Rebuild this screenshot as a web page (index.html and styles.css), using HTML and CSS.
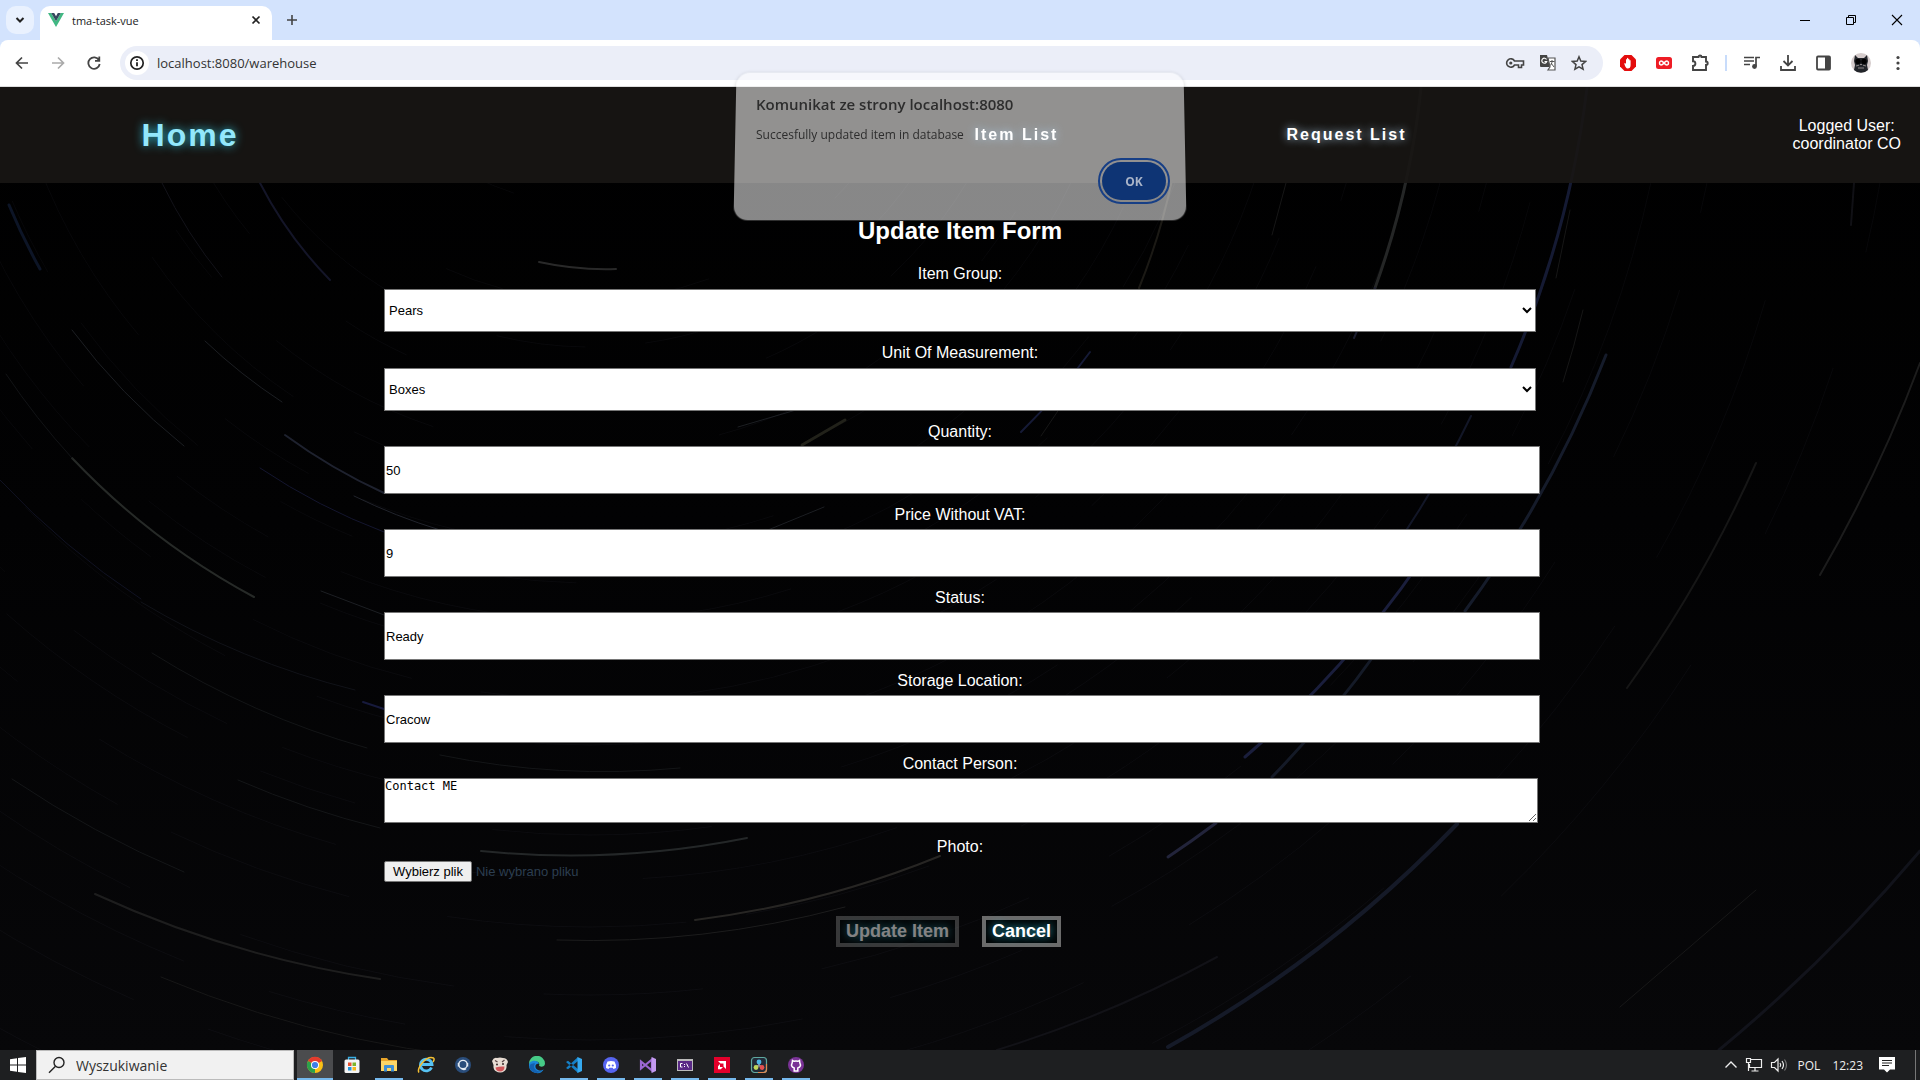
FILE: index.html
```html
<!DOCTYPE html>
<html lang="pl">
<head>
<meta charset="utf-8">
<title>tma-task-vue</title>
<link rel="stylesheet" href="styles.css">
</head>
<body>
<header class="browser">
  <div class="tabstrip">
    <button class="tab-search" aria-label="Szukaj kart"><svg width="12" height="12" viewBox="0 0 12 12"><path d="M2.500 4l3.500 3.500L9.500 4" fill="none" stroke="#222" stroke-width="2"/></svg></button>
    <div class="tab">
      <svg width="16" height="14" viewBox="0 0 16 14"><path d="M0 0h3.200L8 8.300 12.800 0H16L8 14z" fill="#41b883"/><path d="M3.200 0h3L8 3.200 9.800 0h3L8 8.300z" fill="#35495e"/></svg>
      <span class="tab-title">tma-task-vue</span>
      <button class="plain" aria-label="Zamknij"><svg width="10" height="10" viewBox="0 0 10 10"><path d="M1.500 1.500l7 7m0-7l-7 7" stroke="#222" stroke-width="1.700"/></svg></button>
    </div>
    <button class="plain new-tab" aria-label="Nowa karta"><svg width="12" height="12" viewBox="0 0 12 12"><path d="M6 1v10M1 6h10" stroke="#444" stroke-width="1.600"/></svg></button>
    <div class="window-controls">
      <button class="plain" aria-label="Minimalizuj"><svg width="12" height="12" viewBox="0 0 12 12"><path d="M1 6.500h10" stroke="#000"/></svg></button>
      <button class="plain" aria-label="Przywróć"><svg width="12" height="12" viewBox="0 0 12 12"><path d="M1.500 3.500h7v7h-7zM3.500 3.500v-2h7v7h-2" fill="none" stroke="#000"/></svg></button>
      <button class="plain" aria-label="Zamknij okno"><svg width="12" height="12" viewBox="0 0 12 12"><path d="M1 1l10 10M11 1L1 11" stroke="#000" stroke-width="1.100"/></svg></button>
    </div>
  </div>
  <div class="toolbar">
    <div class="nav-buttons">
      <button class="plain" aria-label="Wstecz"><svg width="14" height="14" viewBox="0 0 14 14"><path d="M13 7H2m5-5.500L1.500 7 7 12.500" fill="none" stroke="#444" stroke-width="1.700"/></svg></button>
      <button class="plain" aria-label="Dalej"><svg width="14" height="14" viewBox="0 0 14 14"><path d="M1 7h11M7 1.500L12.500 7 7 12.500" fill="none" stroke="#aaa" stroke-width="1.700"/></svg></button>
      <button class="plain" aria-label="Odśwież"><svg width="14" height="14" viewBox="0 0 14 14"><path d="M12 4.200A5.700 5.700 0 1 0 12.700 8M12.300 0.500v4.300H8" fill="none" stroke="#444" stroke-width="1.800"/></svg></button>
    </div>
    <div class="omnibox">
      <span class="site-info"><svg width="16" height="16" viewBox="0 0 16 16"><circle cx="8" cy="8" r="6.200" fill="none" stroke="#222" stroke-width="1.700"/><path d="M8 7.200v4M8 4.300v1.700" stroke="#222" stroke-width="1.800"/></svg></span>
      <input class="url" type="text" aria-label="Adres" value="localhost:8080/warehouse">
      <button class="plain" aria-label="Hasła"><svg width="20" height="14" viewBox="0 0 20 14"><path d="M9.500 5h9v4h-2v2.500h-3V9h-4a4.200 4.200 0 1 1 0-4z" fill="none" stroke="#444" stroke-width="1.600"/><circle cx="5.800" cy="7" r="1.600" fill="#444"/></svg></button>
      <button class="plain" aria-label="Przetłumacz"><svg width="18" height="18" viewBox="0 0 18 18"><path d="M1 1h7l3 12H2a1 1 0 0 1-1-1z" fill="#444"/><path d="M9 4h7v12H9l2-3z" fill="#fff" stroke="#555" stroke-width="1.200"/><path d="M7.500 5.500A2.500 2.500 0 1 0 7.700 7.500H5.500" fill="none" stroke="#fff" stroke-width="1.200"/><path d="M11 7.500h4.500M13 6v1.500c0 2-1 3.500-2 4M12 9l3 4" fill="none" stroke="#555"/></svg></button>
      <button class="plain" aria-label="Zakładka"><svg width="16" height="16" viewBox="0 0 16 16"><path d="M8 1.800l1.800 4.300 4.700.4L11 9.600l1.100 4.600L8 11.800l-4.100 2.400L5 9.600 1.500 6.500l4.700-.4z" fill="none" stroke="#444" stroke-width="1.500"/></svg></button>
    </div>
    <div class="extensions">
      <svg width="18" height="18" viewBox="0 0 18 18"><path d="M5.500 1h7L17 5.500v7L12.500 17h-7L1 12.500v-7z" fill="#e40d0d"/><path d="M5.200 9.500l1-.5.800 1V5.500q.5-1 1 0V4.300q.6-1 1.200 0v1q.6-1 1.200 0v1.200q.6-.8 1.200 0V11q0 3.500-3 3.500-2 0-3.400-5z" fill="#fff"/></svg>
      <svg width="18" height="18" viewBox="0 0 18 18"><rect x="1" y="3" width="16" height="12" rx="2.500" fill="#ee1c25"/><path d="M9 9c-3-3.500-4.500-1.500-4.500 0S6 12.500 9 9s4.500-1.500 4.500 0S12 12.500 9 9z" fill="none" stroke="#fff" stroke-width="1.500"/></svg>
      <svg width="18" height="18" viewBox="0 0 18 18"><path d="M2 3h5.500a1.500 1.500 0 0 1 3 0H15v4.500a1.700 1.700 0 0 1 0 3.400V16H2v-4a2.300 2.300 0 0 0 0-4.800z" fill="none" stroke="#444" stroke-width="1.900"/></svg>
    </div>
    <span class="divider"></span>
    <div class="extensions">
      <svg width="18" height="18" viewBox="0 0 18 18"><path d="M1 3.500h10M1 7h10M1 10.500h6M13 12V3.500h4" fill="none" stroke="#444" stroke-width="1.700"/><circle cx="11.500" cy="12.500" r="2.400" fill="#444"/></svg>
      <svg width="18" height="18" viewBox="0 0 18 18"><path d="M9 1v10M4.500 7L9 11.500 13.500 7M2 12v4h14v-4" fill="none" stroke="#444" stroke-width="1.800"/></svg>
      <svg width="18" height="18" viewBox="0 0 18 18"><rect x="2" y="2.500" width="13" height="13" rx="1" fill="none" stroke="#444" stroke-width="1.800"/><path d="M10 2.500h5v13h-5z" fill="#444"/></svg>
      <svg width="20" height="20" viewBox="0 0 20 20"><circle cx="10" cy="10" r="10" fill="#d5cccc"/><path d="M4 2l3 3h6l3-3 1 6-1 4 1 5a10 10 0 0 1-14 0l1-5-1-4z" fill="#22252a"/><circle cx="7" cy="8.500" r="2.700" fill="#000"/><circle cx="13" cy="8.500" r="2.700" fill="#000"/><path d="M5 13l3-.8m4 0l3 .8M9 11.500h2M7 15h6" stroke="#8b8585"/></svg>
      <svg width="18" height="18" viewBox="0 0 18 18"><g fill="#444"><circle cx="9" cy="3.500" r="1.600"/><circle cx="9" cy="9" r="1.600"/><circle cx="9" cy="14.500" r="1.600"/></g></svg>
    </div>
  </div>
  <div class="alert" role="alertdialog" aria-labelledby="alert-title">
    <h1 class="alert-title" id="alert-title">Komunikat ze strony localhost:8080</h1>
    <p class="alert-text">Succesfully updated item in database</p>
    <button class="alert-ok">OK</button>
  </div>
</header>

<main class="page">
  <svg class="sky" viewBox="0 87 1920 963" preserveAspectRatio="xMidYMid slice" aria-hidden="true">
    <g fill="none" stroke="#9aa0b4" stroke-opacity=".06" stroke-width="1">
      <circle cx="590" cy="-45" r="250" stroke-dasharray="90 140 40 200"/>
      <circle cx="590" cy="-45" r="345" stroke-dasharray="120 90 60 150"/>
      <circle cx="590" cy="-45" r="392" stroke-dasharray="150 60 90 110"/>
      <circle cx="590" cy="-45" r="440" stroke-dasharray="70 130 160 80"/>
      <circle cx="590" cy="-45" r="497" stroke-dasharray="180 90 60 140"/>
      <circle cx="590" cy="-45" r="532" stroke-dasharray="120 70 200 90"/>
      <circle cx="590" cy="-45" r="590" stroke-dasharray="200 60 100 120"/>
      <circle cx="590" cy="-45" r="628" stroke-dasharray="80 100 170 60"/>
      <circle cx="590" cy="-45" r="665" stroke-dasharray="220 80 110 130"/>
      <circle cx="590" cy="-45" r="702" stroke-dasharray="140 80 200 60"/>
      <circle cx="590" cy="-45" r="745" stroke-dasharray="170 120 90 70"/>
      <circle cx="590" cy="-45" r="790" stroke-dasharray="250 70 120 100"/>
      <circle cx="590" cy="-45" r="850" stroke-dasharray="180 90 240 60"/>
      <circle cx="590" cy="-45" r="880" stroke-dasharray="100 80 220 140"/>
      <circle cx="590" cy="-45" r="925" stroke-dasharray="260 100 90 120"/>
      <circle cx="590" cy="-45" r="972" stroke-dasharray="190 60 240 100"/>
      <circle cx="590" cy="-45" r="1040" stroke-dasharray="220 120 160 90"/>
      <circle cx="590" cy="-45" r="1085" stroke-dasharray="140 90 300 100"/>
      <circle cx="590" cy="-45" r="1140" stroke-dasharray="260 80 180 120"/>
      <circle cx="590" cy="-45" r="1225" stroke-dasharray="200 150 280 80"/>
      <circle cx="590" cy="-45" r="1310" stroke-dasharray="300 120 180 150"/>
    </g>
    <g fill="none" stroke="#23262b" stroke-linecap="round">
      <path stroke="#343434" stroke-width="2" d="M539 262A311 311 0 0 0 616 269"/>
      <path stroke-width="1" d="M72 330A640 640 0 0 0 184 446"/>
      <path stroke="#303431" stroke-width="2" d="M72 458A722 722 0 0 0 254 597"/>
      <path d="M205 341A545 545 0 0 0 282 402"/>
      <path stroke="#262a3a" stroke-width="2" d="M285 435A568 568 0 0 0 384 493"/>
      <path stroke="#191b3a" d="M260 468A610 610 0 0 0 384 532"/>
      <path stroke="#292c36" d="M354 496A590 590 0 0 0 440 530"/>
      <path stroke="#191b32" stroke-width="2" d="M260 183A400 400 0 0 0 330 280"/>
      <path stroke="#17171f" d="M162 183A485 485 0 0 0 222 277"/>
      <path stroke="#101a30" stroke-width="3" d="M9 205A632 632 0 0 0 40 269"/>
      <path stroke="#16181b" d="M6 374A720 720 0 0 0 72 458"/>
      <path stroke="#14162a" d="M0 480A788 788 0 0 0 141 599"/>
      <path stroke="#14161d" d="M141 602A788 788 0 0 0 355 690"/>
      <path stroke="#17191b" d="M152 653A825 825 0 0 0 367 748"/>
      <path stroke="#2c3031" stroke-width="2" d="M481 851A903 903 0 0 0 747 838"/>
      <path stroke="#302e2b" stroke-width="2" d="M695 920A970 970 0 0 0 940 856"/>
      <path stroke="#222" d="M557 940A986 986 0 0 0 845 907"/>
      <path stroke="#242424" stroke-width="2" d="M95 894A1063 1063 0 0 0 380 979"/>
      <path stroke="#1b1b1b" d="M161 977A1108 1108 0 0 0 560 1063"/>
      <path stroke="#1c204a" stroke-width="2" d="M363 702L384 709"/>
      <path stroke="#2a2a20" stroke-width="3" d="M802 445L845 420"/>
      <path d="M738 427L796 410M768 530L824 507M321 591L392 618"/>
      <path stroke="#181a1c" d="M440 755A815 815 0 0 0 680 768M12 779A1005 1005 0 0 0 184 872M238 780A896 896 0 0 0 380 828"/>
      <path stroke="#2e3030" stroke-width="3" d="M1421 88A843 843 0 0 1 1375 288"/>
      <path stroke="#22243a" stroke-width="2" d="M1375 288A843 843 0 0 1 1354 338"/>
      <path stroke="#1a2140" stroke-width="3" d="M1587 88A1010 1010 0 0 1 1511 367"/>
      <path stroke="#1a2234" stroke-width="3" d="M1606 355A1092 1092 0 0 1 1465 611"/>
      <path stroke="#171c30" stroke-width="2" d="M1471 416A996 996 0 0 1 1386 560"/>
      <path stroke="#20254a" stroke-width="3" d="M1438 535A1025 1025 0 0 1 1245 757"/>
      <path stroke="#192030" stroke-width="3" d="M1378 650A1052 1052 0 0 1 1272 777"/>
      <path stroke="#2a2c48" stroke-width="3" d="M1216 823A1072 1072 0 0 1 1168 857"/>
      <path stroke="#191f30" stroke-width="4" d="M1457 824A1232 1232 0 0 1 1168 1047"/>
      <path stroke="#232323" stroke-width="2" d="M1920 363A1391 1391 0 0 1 1820 575"/>
      <path stroke="#1b1b1b" stroke-width="2" d="M1756 463A1270 1270 0 0 1 1627 688"/>
      <path stroke="#151720" stroke-width="3" d="M1920 851A1600 1600 0 0 1 1719 1050"/>
      <path stroke="#22201a" stroke-width="2" d="M1172 180A624 624 0 0 1 1139 288"/>
      <path stroke="#1b2144" stroke-width="2" d="M1090 352A640 640 0 0 1 1021 432"/>
      <path stroke="#1c1c1c" d="M1064 402L1041 436M1286 183L1272 235M1570 210L1556 278M1583 310A1060 1060 0 0 1 1563 382M1756 890L1620 1007"/>
      <path stroke="#15151b" stroke-width="2" d="M1217 957A1190 1190 0 0 1 997 1050M1854 183L1851 225"/>
    </g>
  </svg>

  <nav class="navbar">
    <a class="brand" href="#home">Home</a>
    <a class="nav-link items" href="#items">Item List</a>
    <a class="nav-link requests" href="#requests">Request List</a>
    <p class="user">Logged User:<br>coordinator CO</p>
  </nav>

  <form class="item-form">
    <h2 class="form-title">Update Item Form</h2>
    <div class="field">
      <label for="group">Item Group:</label>
      <select id="group"><option>Pears</option></select>
    </div>
    <div class="field">
      <label for="unit">Unit Of Measurement:</label>
      <select id="unit"><option>Boxes</option></select>
    </div>
    <div class="field text">
      <label for="quantity">Quantity:</label>
      <input id="quantity" type="text" value="50">
    </div>
    <div class="field text">
      <label for="price">Price Without VAT:</label>
      <input id="price" type="text" value="9">
    </div>
    <div class="field text">
      <label for="status">Status:</label>
      <input id="status" type="text" value="Ready">
    </div>
    <div class="field text">
      <label for="location">Storage Location:</label>
      <input id="location" type="text" value="Cracow">
    </div>
    <div class="field text">
      <label for="contact">Contact Person:</label>
      <textarea id="contact">Contact ME</textarea>
    </div>
    <div class="field photo">
      <label for="photo">Photo:</label>
      <div class="file-row">
        <input class="file-input" id="photo" type="file">
        <label class="file-button" for="photo">Wybierz plik</label>
        <span class="file-name">Nie wybrano pliku</span>
      </div>
    </div>
    <div class="actions">
      <button class="action" type="submit" disabled>Update Item</button>
      <button class="action" type="button">Cancel</button>
    </div>
  </form>
</main>

<footer class="taskbar">
  <button class="plain start" aria-label="Start"><svg width="16" height="16" viewBox="0 0 16 16"><path d="M0 2.300L7 1.300v6.300H0zM8 1.100L16 0v7.600H8zM0 8.500h7v6.300l-7-1zM8 8.500h8V16l-8-1.100z" fill="#fff"/></svg></button>
  <label class="search">
    <svg width="18" height="18" viewBox="0 0 18 18"><circle cx="11" cy="6.500" r="5" fill="none" stroke="#222" stroke-width="1.400"/><path d="M7.500 10.200L1 16.800" stroke="#222" stroke-width="1.400"/></svg>
    <input type="text" aria-label="Wyszukiwanie" placeholder="Wyszukiwanie">
  </label>
  <div class="apps">
    <span class="app open active"><svg width="18" height="18" viewBox="0 0 18 18"><circle cx="9" cy="9" r="8" fill="#fbc116"/><path d="M9 9L2 5a8 8 0 0 1 14 0z" fill="#e33b2e"/><path d="M9 9l0 8A8 8 0 0 1 2 5z" fill="#2ba24c"/><circle cx="9" cy="9" r="4" fill="#fff"/><circle cx="9" cy="9" r="3.100" fill="#3f7ee8"/></svg></span>
    <span class="app"><svg width="18" height="18" viewBox="0 0 18 18"><path d="M5.500 4V1.500h7V4" fill="none" stroke="#3ab0e6" stroke-width="1.300"/><rect x="1.500" y="3.500" width="15" height="13.500" rx="1.500" fill="#f4f4f4"/><path d="M5 6.500h3.500V10H5z" fill="#e8502e"/><path d="M9.500 6.500H13V10H9.500z" fill="#7cb529"/><path d="M5 11h3.500v3.500H5z" fill="#2494d8"/><path d="M9.500 11H13v3.500H9.500z" fill="#f5b81c"/></svg></span>
    <span class="app open"><svg width="18" height="18" viewBox="0 0 18 18"><path d="M1 2h6l1.500 2H17v11H1z" fill="#e9a52a"/><path d="M1 5h16v10H1z" fill="#fcd667"/><path d="M4 15.500V10q0-1 1-1h8q1 0 1 1v5.500h-3V12H7v3.500z" fill="#3d8fd6"/></svg></span>
    <span class="app"><svg width="18" height="18" viewBox="0 0 18 18"><path d="M14.500 11.500A5.800 5.800 0 1 1 15 8.500H5" fill="none" stroke="#57c2f2" stroke-width="2.800"/><path d="M2 16.500C-1 13 9-1 16.500 2c1 .800.500 2.500-.5 4" fill="none" stroke="#f5c033" stroke-width="1.500"/></svg></span>
    <span class="app"><svg width="18" height="18" viewBox="0 0 18 18"><circle cx="9" cy="9" r="8" fill="#2a4d7b"/><circle cx="9" cy="8.500" r="4.200" fill="none" stroke="#e4eaf2" stroke-width="1.300"/><path d="M4.500 7v3.500M13.500 7v3.500M7 12.500q3 2 5 0" stroke="#e4eaf2" stroke-width="1.500" fill="none"/></svg></span>
    <span class="app"><svg width="18" height="18" viewBox="0 0 18 18"><path d="M1 5q2-4 5-3 3-1 6 0 4 0 5 4l-1.500 3q.5 4-2 6-4 3-9 0-2.500-2-2-6z" fill="#e8ddd4"/><path d="M4.500 11.500q4.500-1.500 9-1 0 5-4.500 5-4 0-4.500-4z" fill="#d0565a"/><path d="M4 4.500l2.500 1.500M13.500 4L11 6" stroke="#5a4546" stroke-width="1.300"/><circle cx="6" cy="8.500" r="1" fill="#3a2829"/><circle cx="12" cy="8" r="1" fill="#3a2829"/></svg></span>
    <span class="app"><svg width="18" height="18" viewBox="0 0 18 18"><path d="M1 8a8 8 0 0 1 16-.5c0 3.500-5 4-6 2 1-2-.5-4-3-4-3 0-5 2-7 2.500z" fill="#46cb87"/><path d="M1 9c0-5 9-6 10-1-4-1-5 4-1 6 2 1 4.500.5 6-1A8 8 0 0 1 1 9z" fill="#1a86d8"/><path d="M6 10c0 4 4 6 8 5-7 5-14-1-12-6 1-1 3-2 5-1.500z" fill="#1461b0"/></svg></span>
    <span class="app open"><svg width="18" height="18" viewBox="0 0 18 18"><path d="M1 6l2-1.300L13 13v4zM1 12l2 1.300L13 5V1z" fill="#1580c8"/><path d="M12.500 1L17 3v12l-4.500 2z" fill="#35a9f0"/></svg></span>
    <span class="app open"><svg width="18" height="18" viewBox="0 0 18 18"><circle cx="9" cy="9" r="8" fill="#5765f0"/><path d="M5.500 5.500Q9 4.300 12.500 5.500 14.500 9 14 12l-2.500 1-.8-1.200H7.300L6.500 13 4 12q-.5-3 1.500-6.500z" fill="#fff"/><circle cx="7.200" cy="9.500" r="1.100" fill="#5765f0"/><circle cx="10.800" cy="9.500" r="1.100" fill="#5765f0"/></svg></span>
    <span class="app open"><svg width="18" height="18" viewBox="0 0 18 18"><path d="M2 5.500v7L13 3.500v11z" fill="none" stroke="#9b67d3" stroke-width="2.200"/><path d="M12.500 1L17 3v12l-4.500 2z" fill="#c39af0"/></svg></span>
    <span class="app open"><svg width="18" height="18" viewBox="0 0 18 18"><path d="M1 3h16v12H1z" fill="#bbb"/><path d="M2 5h14v9H2z" fill="#5a2a86"/><path d="M6.500 7.500h-2v3.500h2M8 8.500h1M8 10.500h1M10.500 7.500l2 4" fill="none" stroke="#fff"/></svg></span>
    <span class="app open"><svg width="18" height="18" viewBox="0 0 18 18"><path d="M1 1h16v16H1z" fill="#e4002b"/><path d="M5 5h8v8l-2.500-2.500v-3h-3z" fill="#fff"/><path d="M7 8v3h3l-2.200 2.200H5v-3z" fill="#fff"/></svg></span>
    <span class="app open"><svg width="18" height="18" viewBox="0 0 18 18"><rect x="1.500" y="1.500" width="15" height="15" rx="3" fill="#232b38" stroke="#5fa8a0" stroke-width="1.200"/><path d="M16.500 8v5.500a3 3 0 0 1-3 3H8" fill="none" stroke="#e08852" stroke-width="1.200"/><path d="M9 9L9 6M9 9l-3 2.500M9 9l3 2.500" stroke="#889" stroke-width="2"/><circle cx="9" cy="6" r="2.400" fill="#4cb6e4"/><circle cx="6" cy="11.500" r="2.400" fill="#bfd75a"/><circle cx="12" cy="11.500" r="2.400" fill="#e5504f"/></svg></span>
    <span class="app open"><svg width="18" height="18" viewBox="0 0 18 18"><circle cx="9" cy="9" r="8" fill="#7a3296"/><path d="M5.500 4.500L7 5.300q2-.5 4 0l1.500-.8.300 2.300q2 4-2 5.200v3h-3.600v-3q-4-1.200-2-5.200z" fill="none" stroke="#fff" stroke-width="1.500"/></svg></span>
  </div>
  <div class="tray">
    <svg width="14" height="14" viewBox="0 0 14 14"><path d="M1.500 9.500L7 4l5.500 5.500" fill="none" stroke="#eee" stroke-width="1.400"/></svg>
    <svg width="18" height="16" viewBox="0 0 18 16"><path d="M6 2.500h10.500v8H4.500V7M10 10.500v3.500M6.500 14h7M1.500 1.500h4v4h-4zM3.500 5.500V14" fill="none" stroke="#eee" stroke-width="1.200"/></svg>
    <svg width="18" height="16" viewBox="0 0 18 16"><path d="M1.500 5.500h3L8 2v12l-3.500-3.500h-3z" fill="none" stroke="#eee" stroke-width="1.200"/><path d="M10 6q1.500 2 0 4M12 4q3 4 0 8" fill="none" stroke="#eee" stroke-width="1.200"/><path d="M14.500 2.500q4 5.500 0 11" fill="none" stroke="#777" stroke-width="1.200"/></svg>
    <span class="lang">POL</span>
    <span class="clock">12:23</span>
    <svg width="16" height="16" viewBox="0 0 16 16"><path d="M0 0h16v12.500h-5L8 15.500l-3-3H0z" fill="#fff"/><path d="M3 3.500h10M3 6h10M3 8.500h7" stroke="#222"/></svg>
    <span class="show-desktop"></span>
  </div>
</footer>
</body>
</html>
```
FILE: styles.css
```css
* { box-sizing: border-box; }
body {
  margin: 0;
  min-height: 100vh;
  display: flex;
  flex-direction: column;
  background: #020203;
  font-family: "Liberation Sans", Arial, sans-serif;
}
svg { display: block; flex: none; }
.plain {
  border: 0;
  padding: 0;
  background: none;
  display: flex;
  align-items: center;
  justify-content: center;
}

/* Browser chrome */
.browser { position: relative; background: #d3e3fd; font-family: "Open Sans", "Noto Sans", sans-serif; }
.tabstrip { height: 40px; display: flex; align-items: center; padding-left: 6px; }
.tab-search {
  width: 28px;
  height: 28px;
  border: 0;
  padding: 0;
  border-radius: 10px;
  background: #e9f1fe;
  display: flex;
  align-items: center;
  justify-content: center;
}
.tab {
  width: 232px;
  height: 34px;
  margin: 6px 0 0 6px;
  padding: 0 11px 6px 8px;
  border-radius: 10px 10px 0 0;
  background: #fff;
  display: flex;
  align-items: center;
  gap: 8px;
}
.tab-title { flex: 1; font-size: 11px; color: #222; }
.new-tab { margin-left: 14px; }
.window-controls { margin-left: auto; display: flex; }
.window-controls .plain { width: 46px; height: 40px; }
.toolbar {
  height: 47px;
  padding: 0 13px 0 15px;
  border-bottom: 1px solid #ddd;
  border-radius: 8px 8px 0 0;
  background: #fff;
  display: flex;
  align-items: center;
}
.nav-buttons { display: flex; gap: 22px; }
.omnibox {
  flex: 1;
  height: 34px;
  margin: 0 16px 0 19px;
  padding: 0 16px 0 5px;
  border-radius: 17px;
  background: #ebeef8;
  display: flex;
  align-items: center;
  gap: 14px;
}
.site-info { width: 24px; height: 24px; padding: 4px; border-radius: 12px; background: #fff; }
.url {
  flex: 1;
  margin-left: -6px;
  padding: 0;
  border: 0;
  background: none;
  color: #333;
  font: 13px "Open Sans", "Noto Sans", sans-serif;
}
.extensions { display: flex; align-items: center; gap: 18px; }
.divider { width: 2px; height: 16px; margin: 0 16px; background: #c8dcfb; }

/* Alert fading over the page */
.alert {
  position: absolute;
  z-index: 2;
  top: 71px;
  left: 50%;
  width: 450px;
  height: 150px;
  margin-left: -225px;
  padding: 22px 16px 20px 21px;
  display: flex;
  flex-direction: column;
}
.alert::before {
  content: "";
  position: absolute;
  z-index: -1;
  inset: 0;
  border-radius: 14px;
  background: rgba(255, 255, 255, .53);
  box-shadow: 0 1px 4px rgba(0, 0, 0, .2);
  transform: perspective(2000px) rotateX(10deg);
}
.alert-title { margin: 0; font-size: 15px; line-height: 22px; font-weight: 600; color: #2d2d2d; }
.alert-text { margin: 10px 0 0; font-size: 12px; line-height: 20px; color: #2d2d2d; }
.alert-ok {
  align-self: flex-end;
  margin: auto 3px 1px 0;
  width: 64px;
  height: 38px;
  border: 0;
  border-radius: 20px;
  background: #0e3474;
  outline: 2px solid #173f86;
  outline-offset: 2px;
  color: #a9b4c8;
  font: bold 12px "Open Sans", "Noto Sans", sans-serif;
}

/* Page */
.page {
  position: relative;
  flex: 1;
  background: linear-gradient(#000, #020203 45%, #070709);
  color: #fff;
}
.sky { position: absolute; inset: 0; width: 100%; height: 100%; opacity: .8; }
.navbar {
  position: relative;
  height: 96px;
  display: grid;
  grid-template-columns: 38fr 47fr 33fr 33fr 41fr;
  align-items: center;
  justify-items: center;
  background: rgba(24, 22, 20, .9);
}
.brand {
  color: #93e8fc;
  font-size: 32px;
  font-weight: bold;
  letter-spacing: 2px;
  text-decoration: none;
  text-shadow: 0 0 10px #2fb5cc;
}
.nav-link {
  padding-left: 3px;
  color: #fff;
  font-size: 16px;
  font-weight: bold;
  letter-spacing: 2px;
  text-decoration: none;
  text-shadow: 0 0 8px #a9c8e0;
}
.items { grid-column: 3; z-index: 3; }
.user { justify-self: end; margin: 0 19px 0 0; text-align: center; font-size: 16px; line-height: 18px; }
.item-form { position: relative; width: 60%; margin: 0 auto; padding-bottom: 40px; }
.form-title { margin: 0; padding: 34px 0 20px; text-align: center; font-size: 24px; line-height: 28px; }
.field { display: flex; flex-direction: column; gap: 6px; margin-bottom: 12px; font-size: 16px; line-height: 18px; text-align: center; }
.text { gap: 5px; }
select, .text input, textarea {
  border: 1px solid #767676;
  background: #fff;
  color: #000;
  font: 13px "Liberation Sans", Arial, sans-serif;
}
select { height: 43px; border-radius: 0; }
.text input { box-sizing: content-box; width: 100%; height: 46px; padding: 0 1px; }
textarea {
  box-sizing: content-box;
  width: 100%;
  height: 43px;
  padding: 0;
  font: 12px "DejaVu Sans Mono", monospace;
}
.photo { gap: 5px; padding-top: 3px; margin-bottom: 0; }
.file-row { position: relative; display: flex; align-items: center; gap: 4px; font-size: 13px; }
.file-input { position: absolute; width: 88px; height: 21px; opacity: 0; }
.file-button { padding: 1px 8px; border: 1px solid #767676; border-radius: 2px; background: #efefef; color: #000; line-height: 17px; }
.file-name { color: #2c3e50; }
.actions { display: flex; justify-content: center; margin-top: 34px; }
.action {
  height: 31px;
  margin-right: 23px;
  padding: 0 6px 1px;
  border: 4px solid #6b6b6b;
  background: #020506;
  color: #fff;
  font: bold 18px/20px "Liberation Sans", Arial, sans-serif;
  text-shadow: 0 0 8px #2fb5cc;
}
.action:disabled { opacity: .5; }

/* Taskbar */
.taskbar {
  position: relative;
  height: 30px;
  display: flex;
  align-items: center;
  background: #1e1f21;
  color: #eee;
  font-family: "Open Sans", "Noto Sans", sans-serif;
}
.start { width: 36px; height: 30px; }
.search { width: 258px; height: 30px; padding: 0 11px; border: 1px solid #bbb; background: #f1f1f1; display: flex; align-items: center; gap: 10px; }
.search input { width: 200px; padding: 0; border: 0; background: none; font: 14px "Open Sans", "Noto Sans", sans-serif; }
.search input::placeholder { color: #333; opacity: 1; }
.apps { display: flex; align-self: stretch; gap: 1px; margin-left: 3px; }
.app { width: 36px; display: flex; align-items: center; justify-content: center; border-bottom: 2px solid transparent; padding-top: 2px; }
.open { background: linear-gradient(#76b9ed, #76b9ed) bottom / 28px 2px no-repeat border-box; }
.active { background-color: #4b4c4e; background-size: 100% 2px; }
.tray { margin-left: auto; display: flex; align-items: center; align-self: stretch; font-size: 12px; }
.tray svg + svg { margin-left: 7px; }
.lang { margin-left: 10px; }
.clock { margin: 0 16px 0 12px; }
.show-desktop { width: 1px; height: 30px; margin: 0 4px 0 20px; background: #777; }
```
